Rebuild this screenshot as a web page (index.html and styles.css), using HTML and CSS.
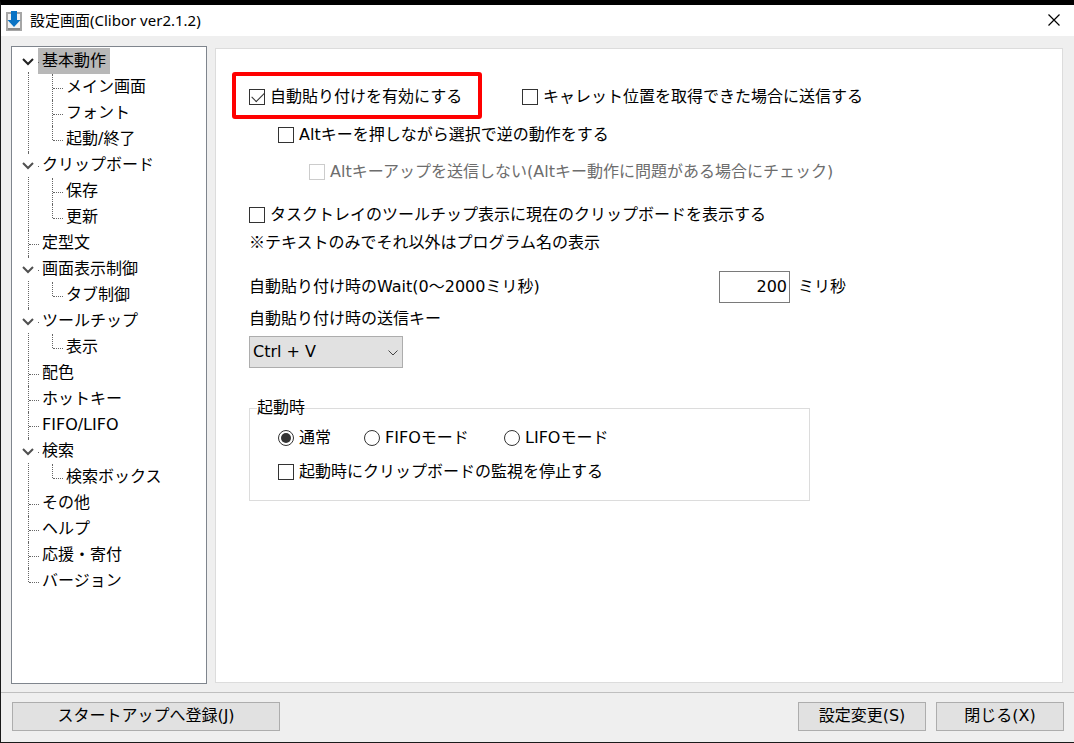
FILE: index.html
```html
<!DOCTYPE html>
<html lang="ja">
<head>
    <meta charset="UTF-8">
    <meta name="viewport" content="width=device-width, initial-scale=1.0">
    <title>設定画面(Clibor ver2.1.2)</title>
    <link rel="stylesheet" href="styles.css">
</head>
<body>
<div class="window">
    <header class="titlebar">
        <svg class="logo" width="16" height="20" viewBox="0 0 16 20">
            <path d="M1 2h14v17H1z" fill="#f2f2f2" stroke="#a6a6a6" stroke-width="2"/>
            <path d="M2 18h12" stroke="#8a8a8a" stroke-width="2"/>
            <path d="M5 0h6v9h3.500L8 16 1.500 9H5z" fill="#0a73c4"/>
        </svg>
        <h1>設定画面(Clibor ver2.1.2)</h1>
        <button class="close" type="button" aria-label="閉じる">
            <svg width="12" height="12" viewBox="0 0 12 12">
                <path d="M0.500 0.500l11 11M11.500 0.500l-11 11" stroke="#000" stroke-width="1.200"/>
            </svg>
        </button>
    </header>

    <div class="body">
        <nav class="side">
            <ul class="tree">
                <li class="parent">
                    <button class="toggle on" type="button" aria-label="開閉"><svg width="12" height="8" viewBox="0 0 12 8"><path d="M1 1l5 5 5-5"/></svg></button>
                    <a class="active" href="#">基本動作</a>
                    <ul>
                        <li><a href="#">メイン画面</a></li>
                        <li><a href="#">フォント</a></li>
                        <li><a href="#">起動/終了</a></li>
                    </ul>
                </li>
                <li class="parent">
                    <button class="toggle" type="button" aria-label="開閉"><svg width="12" height="8" viewBox="0 0 12 8"><path d="M1 1l5 5 5-5"/></svg></button>
                    <a href="#">クリップボード</a>
                    <ul>
                        <li><a href="#">保存</a></li>
                        <li><a href="#">更新</a></li>
                    </ul>
                </li>
                <li><a href="#">定型文</a></li>
                <li class="parent">
                    <button class="toggle" type="button" aria-label="開閉"><svg width="12" height="8" viewBox="0 0 12 8"><path d="M1 1l5 5 5-5"/></svg></button>
                    <a href="#">画面表示制御</a>
                    <ul>
                        <li><a href="#">タブ制御</a></li>
                    </ul>
                </li>
                <li class="parent">
                    <button class="toggle" type="button" aria-label="開閉"><svg width="12" height="8" viewBox="0 0 12 8"><path d="M1 1l5 5 5-5"/></svg></button>
                    <a href="#">ツールチップ</a>
                    <ul>
                        <li><a href="#">表示</a></li>
                    </ul>
                </li>
                <li><a href="#">配色</a></li>
                <li><a href="#">ホットキー</a></li>
                <li><a href="#">FIFO/LIFO</a></li>
                <li class="parent">
                    <button class="toggle" type="button" aria-label="開閉"><svg width="12" height="8" viewBox="0 0 12 8"><path d="M1 1l5 5 5-5"/></svg></button>
                    <a href="#">検索</a>
                    <ul>
                        <li><a href="#">検索ボックス</a></li>
                    </ul>
                </li>
                <li><a href="#">その他</a></li>
                <li><a href="#">ヘルプ</a></li>
                <li><a href="#">応援・寄付</a></li>
                <li><a href="#">バージョン</a></li>
            </ul>
        </nav>

        <main class="panel">
            <div class="row paste">
                <div><label class="check marked"><input type="checkbox" checked>自動貼り付けを有効にする</label></div>
                <label class="check"><input type="checkbox">キャレット位置を取得できた場合に送信する</label>
            </div>
            <div class="row alt">
                <label class="check"><input type="checkbox">Altキーを押しながら選択で逆の動作をする</label>
            </div>
            <div class="row altup">
                <label class="check disabled"><input type="checkbox" disabled>Altキーアップを送信しない(Altキー動作に問題がある場合にチェック)</label>
            </div>
            <div class="row tray">
                <label class="check"><input type="checkbox">タスクトレイのツールチップ表示に現在のクリップボードを表示する</label>
            </div>
            <p class="note">※テキストのみでそれ以外はプログラム名の表示</p>
            <div class="row wait">
                <label for="wait">自動貼り付け時のWait(0～2000ミリ秒)</label>
                <input id="wait" type="text" value="200">
                <span>ミリ秒</span>
            </div>
            <div class="sendkey">
                <label for="key">自動貼り付け時の送信キー</label>
                <div class="select">
                    <select id="key">
                        <option>Ctrl + V</option>
                    </select>
                    <svg width="10" height="6" viewBox="0 0 10 6"><path d="M0.500 0.500L5 5l4.500-4.500"/></svg>
                </div>
            </div>
            <fieldset>
                <legend>起動時</legend>
                <div class="row modes">
                    <label class="check"><input type="radio" name="mode" checked>通常</label>
                    <label class="check"><input type="radio" name="mode">FIFOモード</label>
                    <label class="check"><input type="radio" name="mode">LIFOモード</label>
                </div>
                <label class="check"><input type="checkbox">起動時にクリップボードの監視を停止する</label>
            </fieldset>
        </main>
    </div>

    <footer class="buttons">
        <button class="btn startup" type="button">スタートアップへ登録(J)</button>
        <button class="btn" type="button">設定変更(S)</button>
        <button class="btn" type="button">閉じる(X)</button>
    </footer>
</div>
</body>
</html>
```
FILE: styles.css
```css
* {
    box-sizing: border-box;
}
body {
    margin: 0;
    background: #efefef;
    color: #000;
    font: 16px/24px "DejaVu Sans", "Noto Sans CJK JP", sans-serif;
}
ul, p, h1 {
    margin: 0;
    padding: 0;
    list-style: none;
}
button, input, select {
    margin: 0;
    color: inherit;
    font: inherit;
}
.window {
    display: flex;
    flex-direction: column;
    min-height: 100vh;
    border: 1px solid #1a1a1a;
    border-top: 5px solid #000;
    border-right: 0;
}

/* title bar */
.titlebar {
    display: flex;
    align-items: center;
    height: 31px;
    padding: 0 14px 0 5px;
    background: #fff;
}
.titlebar h1 {
    flex: 1;
    margin-left: 8px;
    padding-bottom: 2px;
    font: 15px/24px "Noto Sans", "Noto Sans CJK JP", sans-serif;
}
.close {
    display: flex;
    padding: 0 0 2px;
    border: 0;
    background: none;
}

/* main area */
.body {
    display: flex;
    flex: 1;
    gap: 8px;
    padding: 10px 11px 8px 10px;
}
.side {
    width: 196px;
    padding-top: 1px;
    background: #fff;
    border: 1px solid #7f858d;
}
.panel {
    flex: 1;
    margin: 2px 0 1px;
    padding: 36px 33px;
    background: #fff;
    border: 1px solid #dcdcdc;
}

/* tree */
.tree li {
    position: relative;
    padding-left: 26px;
}
.tree ul li {
    padding-left: 24px;
}
.tree a {
    display: block;
    width: max-content;
    height: 26px;
    padding: 0 4px;
    color: #000;
    line-height: 26px;
    text-decoration: none;
}
.tree .active {
    background: #b8b8b8;
}
.tree li::before {
    content: "";
    position: absolute;
    top: 0;
    bottom: 0;
    left: 16px;
    border-left: 1px dotted #666;
}
.tree li::after {
    content: "";
    position: absolute;
    top: 14px;
    left: 17px;
    width: 10px;
    border-top: 1px dotted #666;
}
.tree ul li::before {
    left: 14px;
}
.tree ul li::after {
    left: 15px;
}
.tree li:last-child::before {
    bottom: auto;
    height: 14px;
}
.tree .parent:first-child::before {
    top: 24px;
}
.toggle {
    position: absolute;
    top: 3px;
    left: 7px;
    z-index: 1;
    display: flex;
    align-items: center;
    width: 18px;
    height: 21px;
    padding: 0 3px;
    border: 0;
    background: #fff;
}
.toggle path {
    fill: none;
    stroke: #505050;
    stroke-width: 2;
}
.toggle.on path {
    stroke: #222;
}

/* settings */
.row {
    display: flex;
    align-items: center;
}
.check {
    position: relative;
    display: flex;
    align-items: center;
    gap: 5px;
    width: max-content;
}
.check input {
    flex: none;
    width: 16px;
    height: 16px;
    appearance: none;
    background: #fff;
    border: 1px solid #333;
}
.check input[type="checkbox"]:checked::before {
    content: "";
    display: block;
    width: 11px;
    height: 6px;
    margin: 2px 0 0 2px;
    border: solid #333;
    border-width: 0 0 1px 1px;
    transform: rotate(-45deg);
}
.check input[type="radio"] {
    border-radius: 50%;
}
.check input[type="radio"]:checked {
    padding: 2px;
    background: #333 content-box;
}
.check.disabled {
    color: #6d6d6d;
}
.check.disabled input {
    border-color: #ccc;
}
.marked::after {
    content: "";
    position: absolute;
    inset: -13px -20px -10px -17px;
    border: 4px solid #f00;
    border-radius: 3px;
}
.paste {
    display: grid;
    grid-template-columns: 273px auto;
}
.alt {
    margin: 14px 0 0 29px;
}
.altup {
    margin: 13px 0 0 60px;
}
.tray {
    margin: 19px 0 2px;
}
.note {
    font-family: "Noto Sans CJK JP", sans-serif;
}
.wait {
    gap: 8px;
    margin: 18px 0 4px;
}
.wait label {
    width: 462px;
}
.wait input {
    width: 71px;
    height: 32px;
    padding: 0 2px 2px;
    border: 1px solid #7a7a7a;
    text-align: right;
}
.select {
    position: relative;
    width: 154px;
    margin-top: 5px;
}
.select select {
    display: block;
    width: 100%;
    height: 32px;
    padding: 0 3px;
    appearance: none;
    background: #e1e1e1;
    border: 1px solid #adadad;
    border-radius: 0;
}
.select svg {
    position: absolute;
    top: 14px;
    right: 5px;
    pointer-events: none;
}
.select path {
    fill: none;
    stroke: #444;
}
fieldset {
    max-width: 561px;
    margin: 27px 0 0;
    padding: 5px 28px 16px;
    border: 1px solid #dcdcdc;
}
legend {
    margin-left: -21px;
    padding: 0;
    line-height: 26px;
}
.modes {
    display: grid;
    grid-template-columns: 86px 140px auto;
    margin-bottom: 10px;
}

/* bottom buttons */
.buttons {
    display: flex;
    gap: 10px;
    padding: 9px 10px 11px 11px;
    border-top: 1px solid #bfbfbf;
}
.btn {
    width: 128px;
    height: 29px;
    padding: 0 0 2px;
    background: #e1e1e1;
    border: 1px solid #adadad;
}
.startup {
    width: 268px;
    margin-right: auto;
}
```
